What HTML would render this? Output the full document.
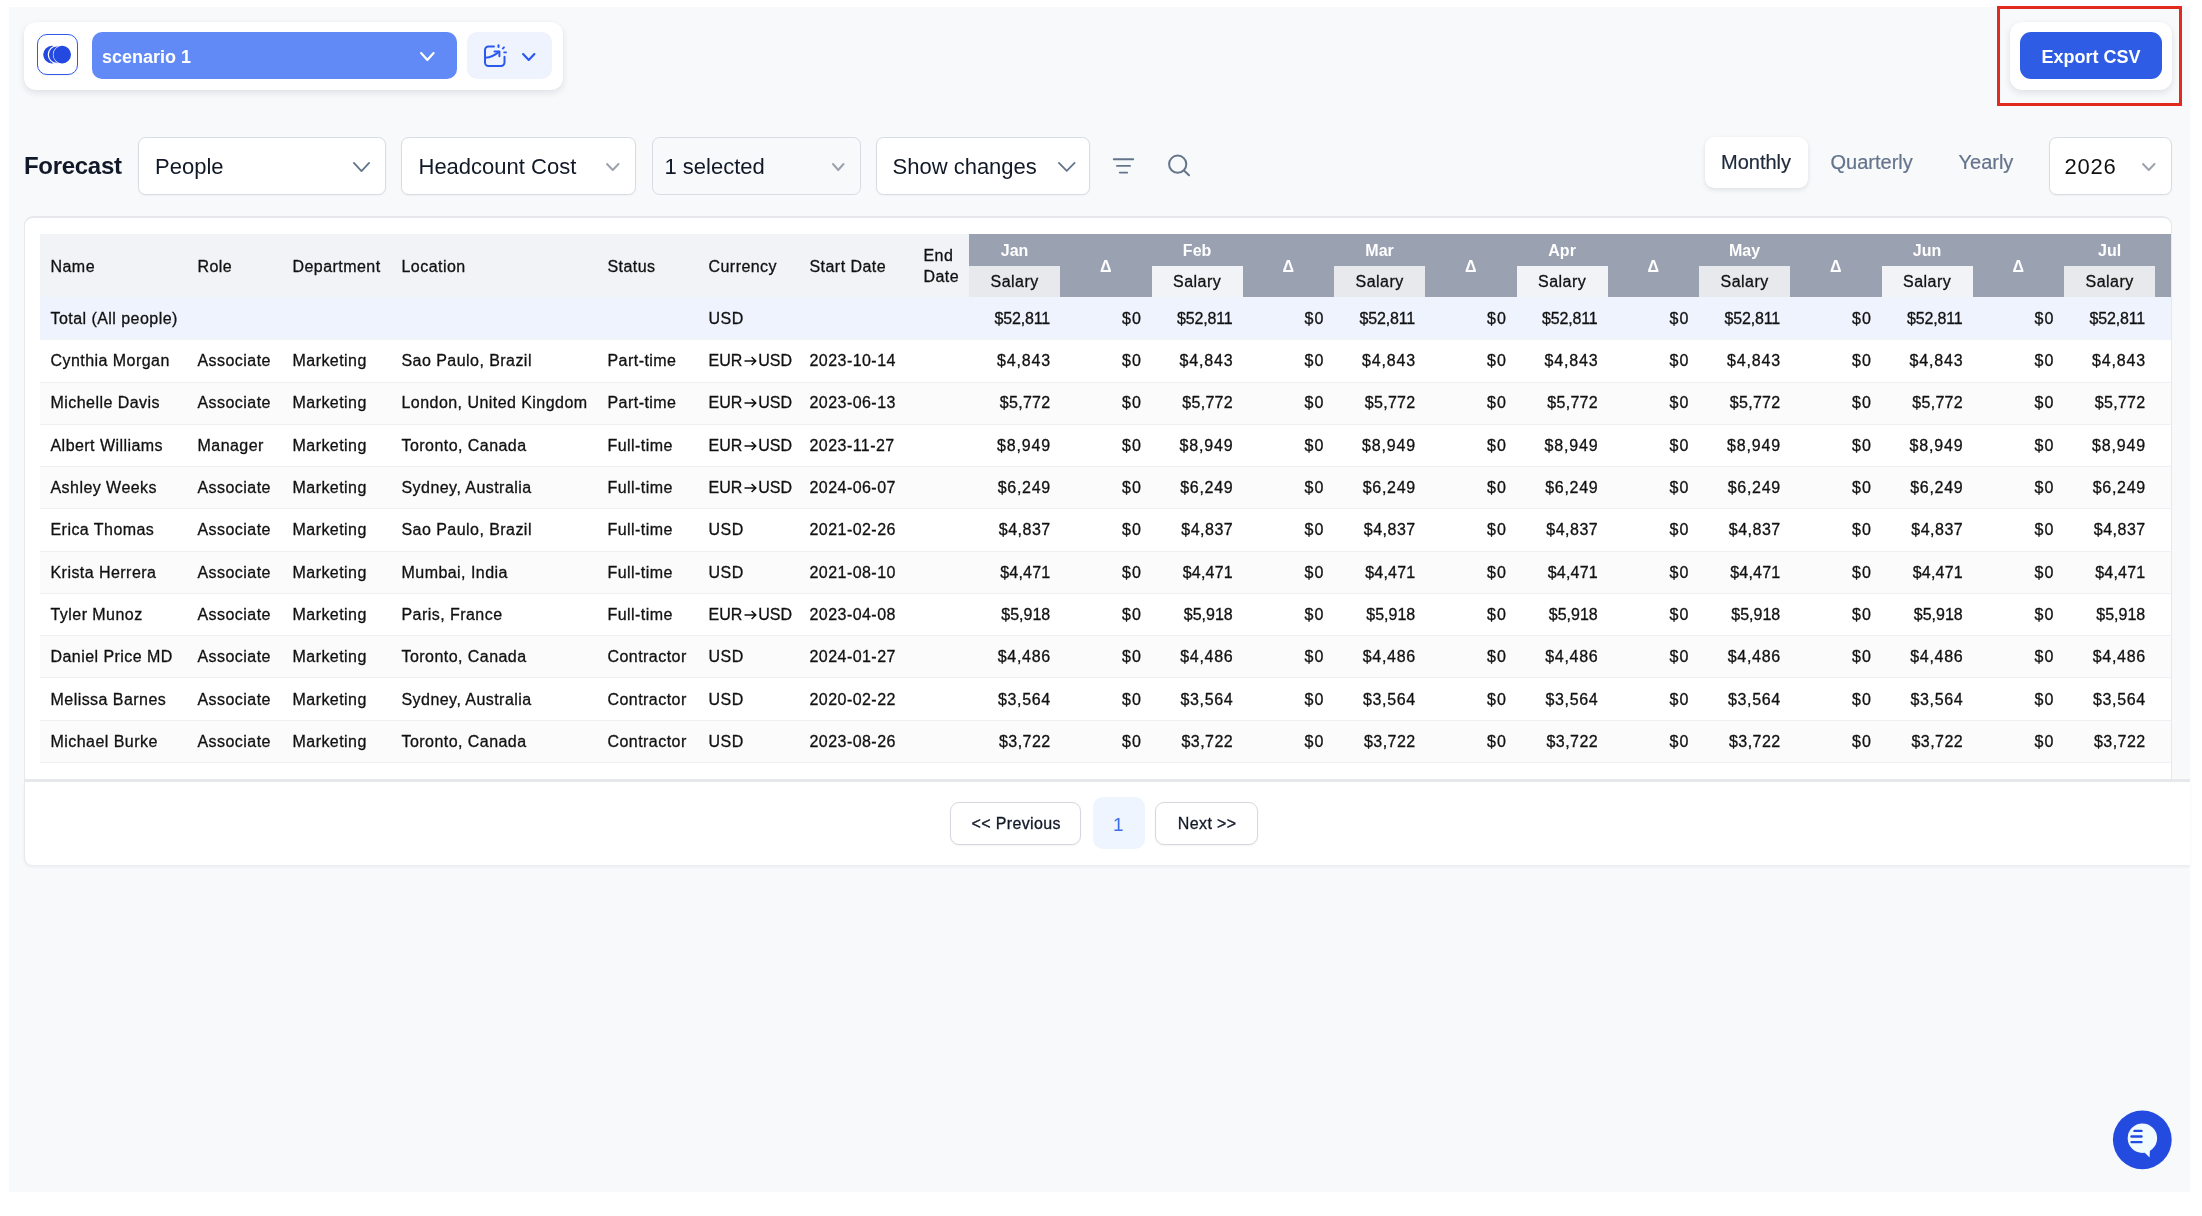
<!DOCTYPE html><html><head><meta charset="utf-8"><title>Forecast</title><style>
*{box-sizing:border-box;margin:0;padding:0}
html,body{width:2202px;height:1216px;overflow:hidden;background:#fff;font-family:"Liberation Sans",sans-serif;color:#111827}
.abs{position:absolute}
#page{position:absolute;left:9px;top:7px;width:2181px;height:1185px;background:#f8f9fb;overflow:hidden}
.card{position:absolute;background:#fff;border-radius:12px;box-shadow:0 3px 7px rgba(15,23,42,0.10),0 0 1px rgba(15,23,42,0.05)}
.dd{position:absolute;background:#fff;border:1px solid #d8dbe2;border-radius:7.5px;box-shadow:0 1px 2px rgba(0,0,0,0.04)}
.ddt{position:absolute;font-size:22px;color:#111;white-space:nowrap;line-height:26px}
.chev{position:absolute}
.t{position:absolute;white-space:nowrap;font-size:16px;line-height:20px;color:#111}
.r{text-align:right}
.c{text-align:center}
</style></head><body>
<div id="page"></div>
<div class="card" style="left:24px;top:22px;width:539px;height:68px"></div>
<div class="abs" style="left:37px;top:34px;width:41px;height:41px;border:1.8px solid #2f5ce6;border-radius:10px;background:#fff;box-shadow:0 1px 2px rgba(0,0,0,0.06)"></div>
<svg class="abs" style="left:37px;top:34px" width="41" height="41" viewBox="37 34 41 41"><circle cx="52.0" cy="54.6" r="8.8" fill="#2349e0"/><circle cx="57.1" cy="54.6" r="8.8" fill="#2349e0" stroke="#fff" stroke-width="1.2"/><circle cx="62.2" cy="54.6" r="8.8" fill="#2349e0" stroke="#fff" stroke-width="1.2"/><circle cx="62.2" cy="54.6" r="8.8" fill="#2349e0"/></svg>
<div class="abs" style="left:91.5px;top:32px;width:365px;height:47px;background:#618af6;border-radius:10px"></div>
<svg class="abs" style="left:418px;top:49.8px" width="18.69999999999999" height="13.100000000000001" viewBox="418 49.8 18.69999999999999 13.100000000000001"><polyline points="421.10,52.90 427.35,59.80 433.60,52.90" fill="none" stroke="#fff" stroke-width="2.2" stroke-linecap="round" stroke-linejoin="round"/></svg>
<div class="abs" style="left:466.5px;top:32px;width:85.5px;height:47px;background:#eef3fe;border-radius:10px"></div>
<svg class="abs" style="left:476px;top:36px" width="70" height="40" viewBox="476 36 70 40" fill="none" stroke="#2b59f0" stroke-width="2" stroke-linecap="round" stroke-linejoin="round"><path d="M494 46.5 H488.5 a3.5 3.5 0 0 0 -3.5 3.5 V62.6 a3.5 3.5 0 0 0 3.5 3.5 H501 a3.5 3.5 0 0 0 3.5 -3.5 V56.8"/><path d="M485.4 57.7 C491 57.5 494.5 55.8 499 51.8"/><path d="M494.5 51.5 H499.4 V56.3"/><path d="M498.5 45.2 V46.9" stroke-width="2"/><path d="M502.8 48.6 L504 47.3" stroke-width="1.8"/><path d="M504.2 52.4 H506" stroke-width="1.8"/></svg>
<svg class="abs" style="left:520px;top:50.6px" width="17.5" height="12.0" viewBox="520 50.6 17.5 12.0"><polyline points="523.10,53.70 528.75,59.50 534.40,53.70" fill="none" stroke="#2b59f0" stroke-width="2.2" stroke-linecap="round" stroke-linejoin="round"/></svg>
<div class="card" style="left:2010px;top:22px;width:162px;height:68px"></div>
<div class="abs" style="left:2020px;top:32px;width:142px;height:47.4px;background:#2e5ce5;border-radius:11px"></div>
<div class="abs" style="left:1997px;top:6px;width:185px;height:100px;border:3px solid #e22a1f"></div>
<div class="dd" style="left:138px;top:136.5px;width:247.5px;height:58px;background:#fff;"></div>
<svg class="abs" style="left:351px;top:160px" width="21" height="14" viewBox="351 160 21 14"><polyline points="353.90,162.90 361.50,171.10 369.10,162.90" fill="none" stroke="#64748b" stroke-width="1.8" stroke-linecap="round" stroke-linejoin="round"/></svg>
<div class="dd" style="left:401px;top:136.5px;width:235px;height:58px;background:#fff;"></div>
<svg class="abs" style="left:604px;top:160.5px" width="17.5" height="12.0" viewBox="604 160.5 17.5 12.0"><polyline points="607.00,163.50 612.75,169.50 618.50,163.50" fill="none" stroke="#9ca3af" stroke-width="2.0" stroke-linecap="round" stroke-linejoin="round"/></svg>
<div class="dd" style="left:652px;top:136.5px;width:208.5px;height:58px;background:#f8f9fb;box-shadow:none;"></div>
<svg class="abs" style="left:829.5px;top:160.5px" width="16.5" height="12.0" viewBox="829.5 160.5 16.5 12.0"><polyline points="832.50,163.50 837.75,169.50 843.00,163.50" fill="none" stroke="#9ca3af" stroke-width="2.0" stroke-linecap="round" stroke-linejoin="round"/></svg>
<div class="dd" style="left:876px;top:136.5px;width:213.5px;height:58px;background:#fff;"></div>
<svg class="abs" style="left:1055.5px;top:160px" width="21.5" height="13.699999999999989" viewBox="1055.5 160 21.5 13.699999999999989"><polyline points="1058.40,162.90 1066.25,170.80 1074.10,162.90" fill="none" stroke="#64748b" stroke-width="1.8" stroke-linecap="round" stroke-linejoin="round"/></svg>
<svg class="abs" style="left:1108px;top:150px" width="32" height="30" viewBox="1108 150 32 30" fill="none" stroke="#64748b" stroke-width="1.9" stroke-linecap="round"><path d="M1113.8 159.2 H1133.2"/><path d="M1117 165.9 H1130"/><path d="M1119.8 172.6 H1127.2"/></svg>
<svg class="abs" style="left:1160px;top:148px" width="36" height="36" viewBox="1160 148 36 36" fill="none" stroke="#64748b" stroke-width="2" stroke-linecap="round"><circle cx="1177.7" cy="164.2" r="8.6"/><path d="M1184 170.5 L1189 175.3"/></svg>
<div class="abs" style="left:1705px;top:137.3px;width:103px;height:51px;background:#fff;border-radius:9px;box-shadow:0 2px 5px rgba(15,23,42,0.10),0 0 1px rgba(15,23,42,0.06)"></div>
<div class="dd" style="left:2048.5px;top:136.5px;width:123px;height:58.5px"></div>
<svg class="abs" style="left:2140px;top:160.5px" width="17.5" height="12.0" viewBox="2140 160.5 17.5 12.0"><polyline points="2143.00,163.50 2148.75,169.50 2154.50,163.50" fill="none" stroke="#9ca3af" stroke-width="2.0" stroke-linecap="round" stroke-linejoin="round"/></svg>
<div class="abs" style="left:24px;top:216.2px;width:2147.5px;height:566px;background:#fff;border:1px solid #e6e8ec;border-top:2px solid #e6e8ec;border-bottom:none;border-radius:9px 9px 0 0"></div>
<div class="abs" style="left:40px;top:234px;width:2131px;height:530px;overflow:hidden">
<div class="abs" style="left:0.00px;top:0.00px;width:929.00px;height:62.50px;background:#f2f3f7"></div>
<div class="abs" style="left:929.00px;top:0.00px;width:1202.00px;height:62.50px;background:#9aa1b1"></div>
<div class="abs" style="left:929.00px;top:32.00px;width:91.20px;height:30.50px;background:#e8e9ed"></div>
<div class="abs" style="left:1111.50px;top:32.00px;width:91.20px;height:30.50px;background:#f2f3f7"></div>
<div class="abs" style="left:1294.00px;top:32.00px;width:91.20px;height:30.50px;background:#e8e9ed"></div>
<div class="abs" style="left:1476.50px;top:32.00px;width:91.20px;height:30.50px;background:#f2f3f7"></div>
<div class="abs" style="left:1659.00px;top:32.00px;width:91.20px;height:30.50px;background:#e8e9ed"></div>
<div class="abs" style="left:1841.50px;top:32.00px;width:91.20px;height:30.50px;background:#f2f3f7"></div>
<div class="abs" style="left:2024.00px;top:32.00px;width:91.20px;height:30.50px;background:#e8e9ed"></div>
<div class="abs" style="left:0.00px;top:62.50px;width:2131.00px;height:43.80px;background:#eef3fe;border-bottom:1px solid #f2f3f6"></div>
<div class="abs" style="left:0.00px;top:106.30px;width:2131.00px;height:42.27px;background:#fff;border-bottom:1px solid #eff0f3"></div>
<div class="abs" style="left:0.00px;top:148.57px;width:2131.00px;height:42.27px;background:#fbfbfc;border-bottom:1px solid #eff0f3"></div>
<div class="abs" style="left:0.00px;top:190.84px;width:2131.00px;height:42.27px;background:#fff;border-bottom:1px solid #eff0f3"></div>
<div class="abs" style="left:0.00px;top:233.11px;width:2131.00px;height:42.27px;background:#fbfbfc;border-bottom:1px solid #eff0f3"></div>
<div class="abs" style="left:0.00px;top:275.38px;width:2131.00px;height:42.27px;background:#fff;border-bottom:1px solid #eff0f3"></div>
<div class="abs" style="left:0.00px;top:317.65px;width:2131.00px;height:42.27px;background:#fbfbfc;border-bottom:1px solid #eff0f3"></div>
<div class="abs" style="left:0.00px;top:359.92px;width:2131.00px;height:42.27px;background:#fff;border-bottom:1px solid #eff0f3"></div>
<div class="abs" style="left:0.00px;top:402.19px;width:2131.00px;height:42.27px;background:#fbfbfc;border-bottom:1px solid #eff0f3"></div>
<div class="abs" style="left:0.00px;top:444.46px;width:2131.00px;height:42.27px;background:#fff;border-bottom:1px solid #eff0f3"></div>
<div class="abs" style="left:0.00px;top:486.73px;width:2131.00px;height:42.27px;background:#fbfbfc;border-bottom:1px solid #eff0f3"></div>
<div class="abs" style="left:0;top:0;width:2131px;height:530px;will-change:transform">
<div class="t" style="top:22.86px;font-size:16px;line-height:20px;color:#111;left:10.50px;letter-spacing:0.45px;-webkit-text-stroke:0.3px currentColor;">Name</div>
<div class="t" style="top:22.86px;font-size:16px;line-height:20px;color:#111;left:157.50px;letter-spacing:0.45px;-webkit-text-stroke:0.3px currentColor;">Role</div>
<div class="t" style="top:22.86px;font-size:16px;line-height:20px;color:#111;left:252.50px;letter-spacing:0.45px;-webkit-text-stroke:0.3px currentColor;">Department</div>
<div class="t" style="top:22.86px;font-size:16px;line-height:20px;color:#111;left:361.50px;letter-spacing:0.45px;-webkit-text-stroke:0.3px currentColor;">Location</div>
<div class="t" style="top:22.86px;font-size:16px;line-height:20px;color:#111;left:567.50px;letter-spacing:0.45px;-webkit-text-stroke:0.3px currentColor;">Status</div>
<div class="t" style="top:22.86px;font-size:16px;line-height:20px;color:#111;left:668.50px;letter-spacing:0.45px;-webkit-text-stroke:0.3px currentColor;">Currency</div>
<div class="t" style="top:22.86px;font-size:16px;line-height:20px;color:#111;left:769.50px;letter-spacing:0.45px;-webkit-text-stroke:0.3px currentColor;">Start Date</div>
<div class="t" style="top:11.56px;font-size:16px;line-height:20px;color:#111;left:883.50px;letter-spacing:0.45px;-webkit-text-stroke:0.3px currentColor;">End</div>
<div class="t" style="top:32.66px;font-size:16px;line-height:20px;color:#111;left:883.50px;letter-spacing:0.45px;-webkit-text-stroke:0.3px currentColor;">Date</div>
<div class="t" style="top:7.26px;font-size:16px;line-height:20px;font-weight:700;color:#fff;left:774.60px;width:400px;text-align:center;">Jan</div>
<div class="t" style="top:38.26px;font-size:16px;line-height:20px;color:#111;left:774.60px;width:400px;text-align:center;letter-spacing:0.45px;-webkit-text-stroke:0.3px currentColor;">Salary</div>
<div class="t" style="top:23.06px;font-size:16px;line-height:20px;font-weight:700;color:#fff;left:865.85px;width:400px;text-align:center;">&#916;</div>
<div class="t" style="top:7.26px;font-size:16px;line-height:20px;font-weight:700;color:#fff;left:957.10px;width:400px;text-align:center;">Feb</div>
<div class="t" style="top:38.26px;font-size:16px;line-height:20px;color:#111;left:957.10px;width:400px;text-align:center;letter-spacing:0.45px;-webkit-text-stroke:0.3px currentColor;">Salary</div>
<div class="t" style="top:23.06px;font-size:16px;line-height:20px;font-weight:700;color:#fff;left:1048.35px;width:400px;text-align:center;">&#916;</div>
<div class="t" style="top:7.26px;font-size:16px;line-height:20px;font-weight:700;color:#fff;left:1139.60px;width:400px;text-align:center;">Mar</div>
<div class="t" style="top:38.26px;font-size:16px;line-height:20px;color:#111;left:1139.60px;width:400px;text-align:center;letter-spacing:0.45px;-webkit-text-stroke:0.3px currentColor;">Salary</div>
<div class="t" style="top:23.06px;font-size:16px;line-height:20px;font-weight:700;color:#fff;left:1230.85px;width:400px;text-align:center;">&#916;</div>
<div class="t" style="top:7.26px;font-size:16px;line-height:20px;font-weight:700;color:#fff;left:1322.10px;width:400px;text-align:center;">Apr</div>
<div class="t" style="top:38.26px;font-size:16px;line-height:20px;color:#111;left:1322.10px;width:400px;text-align:center;letter-spacing:0.45px;-webkit-text-stroke:0.3px currentColor;">Salary</div>
<div class="t" style="top:23.06px;font-size:16px;line-height:20px;font-weight:700;color:#fff;left:1413.35px;width:400px;text-align:center;">&#916;</div>
<div class="t" style="top:7.26px;font-size:16px;line-height:20px;font-weight:700;color:#fff;left:1504.60px;width:400px;text-align:center;">May</div>
<div class="t" style="top:38.26px;font-size:16px;line-height:20px;color:#111;left:1504.60px;width:400px;text-align:center;letter-spacing:0.45px;-webkit-text-stroke:0.3px currentColor;">Salary</div>
<div class="t" style="top:23.06px;font-size:16px;line-height:20px;font-weight:700;color:#fff;left:1595.85px;width:400px;text-align:center;">&#916;</div>
<div class="t" style="top:7.26px;font-size:16px;line-height:20px;font-weight:700;color:#fff;left:1687.10px;width:400px;text-align:center;">Jun</div>
<div class="t" style="top:38.26px;font-size:16px;line-height:20px;color:#111;left:1687.10px;width:400px;text-align:center;letter-spacing:0.45px;-webkit-text-stroke:0.3px currentColor;">Salary</div>
<div class="t" style="top:23.06px;font-size:16px;line-height:20px;font-weight:700;color:#fff;left:1778.35px;width:400px;text-align:center;">&#916;</div>
<div class="t" style="top:7.26px;font-size:16px;line-height:20px;font-weight:700;color:#fff;left:1869.60px;width:400px;text-align:center;">Jul</div>
<div class="t" style="top:38.26px;font-size:16px;line-height:20px;color:#111;left:1869.60px;width:400px;text-align:center;letter-spacing:0.45px;-webkit-text-stroke:0.3px currentColor;">Salary</div>
<div class="t" style="top:23.06px;font-size:16px;line-height:20px;font-weight:700;color:#fff;left:1960.85px;width:400px;text-align:center;">&#916;</div>
<div class="t" style="top:74.76px;font-size:16px;line-height:20px;color:#111;left:10.50px;letter-spacing:0.45px;-webkit-text-stroke:0.3px currentColor;">Total (All people)</div>
<div class="t" style="top:74.76px;font-size:16px;line-height:20px;color:#111;left:668.50px;letter-spacing:0.45px;-webkit-text-stroke:0.3px currentColor;">USD</div>
<div class="t" style="top:74.76px;font-size:16px;line-height:20px;color:#111;left:610.05px;width:400px;text-align:right;letter-spacing:-0.15px;-webkit-text-stroke:0.3px currentColor;">$52,811</div>
<div class="t" style="top:74.76px;font-size:16px;line-height:20px;color:#111;left:702.30px;width:400px;text-align:right;letter-spacing:1.3px;-webkit-text-stroke:0.3px currentColor;">$0</div>
<div class="t" style="top:74.76px;font-size:16px;line-height:20px;color:#111;left:792.55px;width:400px;text-align:right;letter-spacing:-0.15px;-webkit-text-stroke:0.3px currentColor;">$52,811</div>
<div class="t" style="top:74.76px;font-size:16px;line-height:20px;color:#111;left:884.80px;width:400px;text-align:right;letter-spacing:1.3px;-webkit-text-stroke:0.3px currentColor;">$0</div>
<div class="t" style="top:74.76px;font-size:16px;line-height:20px;color:#111;left:975.05px;width:400px;text-align:right;letter-spacing:-0.15px;-webkit-text-stroke:0.3px currentColor;">$52,811</div>
<div class="t" style="top:74.76px;font-size:16px;line-height:20px;color:#111;left:1067.30px;width:400px;text-align:right;letter-spacing:1.3px;-webkit-text-stroke:0.3px currentColor;">$0</div>
<div class="t" style="top:74.76px;font-size:16px;line-height:20px;color:#111;left:1157.55px;width:400px;text-align:right;letter-spacing:-0.15px;-webkit-text-stroke:0.3px currentColor;">$52,811</div>
<div class="t" style="top:74.76px;font-size:16px;line-height:20px;color:#111;left:1249.80px;width:400px;text-align:right;letter-spacing:1.3px;-webkit-text-stroke:0.3px currentColor;">$0</div>
<div class="t" style="top:74.76px;font-size:16px;line-height:20px;color:#111;left:1340.05px;width:400px;text-align:right;letter-spacing:-0.15px;-webkit-text-stroke:0.3px currentColor;">$52,811</div>
<div class="t" style="top:74.76px;font-size:16px;line-height:20px;color:#111;left:1432.30px;width:400px;text-align:right;letter-spacing:1.3px;-webkit-text-stroke:0.3px currentColor;">$0</div>
<div class="t" style="top:74.76px;font-size:16px;line-height:20px;color:#111;left:1522.55px;width:400px;text-align:right;letter-spacing:-0.15px;-webkit-text-stroke:0.3px currentColor;">$52,811</div>
<div class="t" style="top:74.76px;font-size:16px;line-height:20px;color:#111;left:1614.80px;width:400px;text-align:right;letter-spacing:1.3px;-webkit-text-stroke:0.3px currentColor;">$0</div>
<div class="t" style="top:74.76px;font-size:16px;line-height:20px;color:#111;left:1705.05px;width:400px;text-align:right;letter-spacing:-0.15px;-webkit-text-stroke:0.3px currentColor;">$52,811</div>
<div class="t" style="top:74.76px;font-size:16px;line-height:20px;color:#111;left:1797.30px;width:400px;text-align:right;letter-spacing:1.3px;-webkit-text-stroke:0.3px currentColor;">$0</div>
<div class="t" style="top:116.96px;font-size:16px;line-height:20px;color:#111;left:10.50px;letter-spacing:0.45px;-webkit-text-stroke:0.3px currentColor;">Cynthia Morgan</div>
<div class="t" style="top:116.96px;font-size:16px;line-height:20px;color:#111;left:157.50px;letter-spacing:0.45px;-webkit-text-stroke:0.3px currentColor;">Associate</div>
<div class="t" style="top:116.96px;font-size:16px;line-height:20px;color:#111;left:252.50px;letter-spacing:0.45px;-webkit-text-stroke:0.3px currentColor;">Marketing</div>
<div class="t" style="top:116.96px;font-size:16px;line-height:20px;color:#111;left:361.50px;letter-spacing:0.45px;-webkit-text-stroke:0.3px currentColor;">Sao Paulo, Brazil</div>
<div class="t" style="top:116.96px;font-size:16px;line-height:20px;color:#111;left:567.50px;letter-spacing:0.45px;-webkit-text-stroke:0.3px currentColor;">Part-time</div>
<div class="t" style="top:116.96px;font-size:16px;line-height:20px;color:#111;left:668.50px;-webkit-text-stroke:0.3px currentColor;">EUR<svg width="13" height="10" viewBox="0 0 13 10" style="display:inline-block;vertical-align:0px;margin:0 1.5px 0 1.5px"><path d="M0.5 5 H11.6 M7.6 1 L11.8 5 L7.6 9" fill="none" stroke="#111" stroke-width="1.6" stroke-linejoin="round"/></svg>USD</div>
<div class="t" style="top:116.96px;font-size:16px;line-height:20px;color:#111;left:769.50px;letter-spacing:0.45px;-webkit-text-stroke:0.3px currentColor;">2023-10-14</div>
<div class="t" style="top:116.96px;font-size:16px;line-height:20px;color:#111;left:611.05px;width:400px;text-align:right;letter-spacing:0.85px;-webkit-text-stroke:0.3px currentColor;">$4,843</div>
<div class="t" style="top:116.96px;font-size:16px;line-height:20px;color:#111;left:702.30px;width:400px;text-align:right;letter-spacing:1.3px;-webkit-text-stroke:0.3px currentColor;">$0</div>
<div class="t" style="top:116.96px;font-size:16px;line-height:20px;color:#111;left:793.55px;width:400px;text-align:right;letter-spacing:0.85px;-webkit-text-stroke:0.3px currentColor;">$4,843</div>
<div class="t" style="top:116.96px;font-size:16px;line-height:20px;color:#111;left:884.80px;width:400px;text-align:right;letter-spacing:1.3px;-webkit-text-stroke:0.3px currentColor;">$0</div>
<div class="t" style="top:116.96px;font-size:16px;line-height:20px;color:#111;left:976.05px;width:400px;text-align:right;letter-spacing:0.85px;-webkit-text-stroke:0.3px currentColor;">$4,843</div>
<div class="t" style="top:116.96px;font-size:16px;line-height:20px;color:#111;left:1067.30px;width:400px;text-align:right;letter-spacing:1.3px;-webkit-text-stroke:0.3px currentColor;">$0</div>
<div class="t" style="top:116.96px;font-size:16px;line-height:20px;color:#111;left:1158.55px;width:400px;text-align:right;letter-spacing:0.85px;-webkit-text-stroke:0.3px currentColor;">$4,843</div>
<div class="t" style="top:116.96px;font-size:16px;line-height:20px;color:#111;left:1249.80px;width:400px;text-align:right;letter-spacing:1.3px;-webkit-text-stroke:0.3px currentColor;">$0</div>
<div class="t" style="top:116.96px;font-size:16px;line-height:20px;color:#111;left:1341.05px;width:400px;text-align:right;letter-spacing:0.85px;-webkit-text-stroke:0.3px currentColor;">$4,843</div>
<div class="t" style="top:116.96px;font-size:16px;line-height:20px;color:#111;left:1432.30px;width:400px;text-align:right;letter-spacing:1.3px;-webkit-text-stroke:0.3px currentColor;">$0</div>
<div class="t" style="top:116.96px;font-size:16px;line-height:20px;color:#111;left:1523.55px;width:400px;text-align:right;letter-spacing:0.85px;-webkit-text-stroke:0.3px currentColor;">$4,843</div>
<div class="t" style="top:116.96px;font-size:16px;line-height:20px;color:#111;left:1614.80px;width:400px;text-align:right;letter-spacing:1.3px;-webkit-text-stroke:0.3px currentColor;">$0</div>
<div class="t" style="top:116.96px;font-size:16px;line-height:20px;color:#111;left:1706.05px;width:400px;text-align:right;letter-spacing:0.85px;-webkit-text-stroke:0.3px currentColor;">$4,843</div>
<div class="t" style="top:116.96px;font-size:16px;line-height:20px;color:#111;left:1797.30px;width:400px;text-align:right;letter-spacing:1.3px;-webkit-text-stroke:0.3px currentColor;">$0</div>
<div class="t" style="top:159.30px;font-size:16px;line-height:20px;color:#111;left:10.50px;letter-spacing:0.45px;-webkit-text-stroke:0.3px currentColor;">Michelle Davis</div>
<div class="t" style="top:159.30px;font-size:16px;line-height:20px;color:#111;left:157.50px;letter-spacing:0.45px;-webkit-text-stroke:0.3px currentColor;">Associate</div>
<div class="t" style="top:159.30px;font-size:16px;line-height:20px;color:#111;left:252.50px;letter-spacing:0.45px;-webkit-text-stroke:0.3px currentColor;">Marketing</div>
<div class="t" style="top:159.30px;font-size:16px;line-height:20px;color:#111;left:361.50px;letter-spacing:0.45px;-webkit-text-stroke:0.3px currentColor;">London, United Kingdom</div>
<div class="t" style="top:159.30px;font-size:16px;line-height:20px;color:#111;left:567.50px;letter-spacing:0.45px;-webkit-text-stroke:0.3px currentColor;">Part-time</div>
<div class="t" style="top:159.30px;font-size:16px;line-height:20px;color:#111;left:668.50px;-webkit-text-stroke:0.3px currentColor;">EUR<svg width="13" height="10" viewBox="0 0 13 10" style="display:inline-block;vertical-align:0px;margin:0 1.5px 0 1.5px"><path d="M0.5 5 H11.6 M7.6 1 L11.8 5 L7.6 9" fill="none" stroke="#111" stroke-width="1.6" stroke-linejoin="round"/></svg>USD</div>
<div class="t" style="top:159.30px;font-size:16px;line-height:20px;color:#111;left:769.50px;letter-spacing:0.45px;-webkit-text-stroke:0.3px currentColor;">2023-06-13</div>
<div class="t" style="top:159.30px;font-size:16px;line-height:20px;color:#111;left:610.50px;width:400px;text-align:right;letter-spacing:0.3px;-webkit-text-stroke:0.3px currentColor;">$5,772</div>
<div class="t" style="top:159.30px;font-size:16px;line-height:20px;color:#111;left:702.30px;width:400px;text-align:right;letter-spacing:1.3px;-webkit-text-stroke:0.3px currentColor;">$0</div>
<div class="t" style="top:159.30px;font-size:16px;line-height:20px;color:#111;left:793.00px;width:400px;text-align:right;letter-spacing:0.3px;-webkit-text-stroke:0.3px currentColor;">$5,772</div>
<div class="t" style="top:159.30px;font-size:16px;line-height:20px;color:#111;left:884.80px;width:400px;text-align:right;letter-spacing:1.3px;-webkit-text-stroke:0.3px currentColor;">$0</div>
<div class="t" style="top:159.30px;font-size:16px;line-height:20px;color:#111;left:975.50px;width:400px;text-align:right;letter-spacing:0.3px;-webkit-text-stroke:0.3px currentColor;">$5,772</div>
<div class="t" style="top:159.30px;font-size:16px;line-height:20px;color:#111;left:1067.30px;width:400px;text-align:right;letter-spacing:1.3px;-webkit-text-stroke:0.3px currentColor;">$0</div>
<div class="t" style="top:159.30px;font-size:16px;line-height:20px;color:#111;left:1158.00px;width:400px;text-align:right;letter-spacing:0.3px;-webkit-text-stroke:0.3px currentColor;">$5,772</div>
<div class="t" style="top:159.30px;font-size:16px;line-height:20px;color:#111;left:1249.80px;width:400px;text-align:right;letter-spacing:1.3px;-webkit-text-stroke:0.3px currentColor;">$0</div>
<div class="t" style="top:159.30px;font-size:16px;line-height:20px;color:#111;left:1340.50px;width:400px;text-align:right;letter-spacing:0.3px;-webkit-text-stroke:0.3px currentColor;">$5,772</div>
<div class="t" style="top:159.30px;font-size:16px;line-height:20px;color:#111;left:1432.30px;width:400px;text-align:right;letter-spacing:1.3px;-webkit-text-stroke:0.3px currentColor;">$0</div>
<div class="t" style="top:159.30px;font-size:16px;line-height:20px;color:#111;left:1523.00px;width:400px;text-align:right;letter-spacing:0.3px;-webkit-text-stroke:0.3px currentColor;">$5,772</div>
<div class="t" style="top:159.30px;font-size:16px;line-height:20px;color:#111;left:1614.80px;width:400px;text-align:right;letter-spacing:1.3px;-webkit-text-stroke:0.3px currentColor;">$0</div>
<div class="t" style="top:159.30px;font-size:16px;line-height:20px;color:#111;left:1705.50px;width:400px;text-align:right;letter-spacing:0.3px;-webkit-text-stroke:0.3px currentColor;">$5,772</div>
<div class="t" style="top:159.30px;font-size:16px;line-height:20px;color:#111;left:1797.30px;width:400px;text-align:right;letter-spacing:1.3px;-webkit-text-stroke:0.3px currentColor;">$0</div>
<div class="t" style="top:201.64px;font-size:16px;line-height:20px;color:#111;left:10.50px;letter-spacing:0.45px;-webkit-text-stroke:0.3px currentColor;">Albert Williams</div>
<div class="t" style="top:201.64px;font-size:16px;line-height:20px;color:#111;left:157.50px;letter-spacing:0.45px;-webkit-text-stroke:0.3px currentColor;">Manager</div>
<div class="t" style="top:201.64px;font-size:16px;line-height:20px;color:#111;left:252.50px;letter-spacing:0.45px;-webkit-text-stroke:0.3px currentColor;">Marketing</div>
<div class="t" style="top:201.64px;font-size:16px;line-height:20px;color:#111;left:361.50px;letter-spacing:0.45px;-webkit-text-stroke:0.3px currentColor;">Toronto, Canada</div>
<div class="t" style="top:201.64px;font-size:16px;line-height:20px;color:#111;left:567.50px;letter-spacing:0.45px;-webkit-text-stroke:0.3px currentColor;">Full-time</div>
<div class="t" style="top:201.64px;font-size:16px;line-height:20px;color:#111;left:668.50px;-webkit-text-stroke:0.3px currentColor;">EUR<svg width="13" height="10" viewBox="0 0 13 10" style="display:inline-block;vertical-align:0px;margin:0 1.5px 0 1.5px"><path d="M0.5 5 H11.6 M7.6 1 L11.8 5 L7.6 9" fill="none" stroke="#111" stroke-width="1.6" stroke-linejoin="round"/></svg>USD</div>
<div class="t" style="top:201.64px;font-size:16px;line-height:20px;color:#111;left:769.50px;letter-spacing:0.45px;-webkit-text-stroke:0.3px currentColor;">2023-11-27</div>
<div class="t" style="top:201.64px;font-size:16px;line-height:20px;color:#111;left:611.05px;width:400px;text-align:right;letter-spacing:0.85px;-webkit-text-stroke:0.3px currentColor;">$8,949</div>
<div class="t" style="top:201.64px;font-size:16px;line-height:20px;color:#111;left:702.30px;width:400px;text-align:right;letter-spacing:1.3px;-webkit-text-stroke:0.3px currentColor;">$0</div>
<div class="t" style="top:201.64px;font-size:16px;line-height:20px;color:#111;left:793.55px;width:400px;text-align:right;letter-spacing:0.85px;-webkit-text-stroke:0.3px currentColor;">$8,949</div>
<div class="t" style="top:201.64px;font-size:16px;line-height:20px;color:#111;left:884.80px;width:400px;text-align:right;letter-spacing:1.3px;-webkit-text-stroke:0.3px currentColor;">$0</div>
<div class="t" style="top:201.64px;font-size:16px;line-height:20px;color:#111;left:976.05px;width:400px;text-align:right;letter-spacing:0.85px;-webkit-text-stroke:0.3px currentColor;">$8,949</div>
<div class="t" style="top:201.64px;font-size:16px;line-height:20px;color:#111;left:1067.30px;width:400px;text-align:right;letter-spacing:1.3px;-webkit-text-stroke:0.3px currentColor;">$0</div>
<div class="t" style="top:201.64px;font-size:16px;line-height:20px;color:#111;left:1158.55px;width:400px;text-align:right;letter-spacing:0.85px;-webkit-text-stroke:0.3px currentColor;">$8,949</div>
<div class="t" style="top:201.64px;font-size:16px;line-height:20px;color:#111;left:1249.80px;width:400px;text-align:right;letter-spacing:1.3px;-webkit-text-stroke:0.3px currentColor;">$0</div>
<div class="t" style="top:201.64px;font-size:16px;line-height:20px;color:#111;left:1341.05px;width:400px;text-align:right;letter-spacing:0.85px;-webkit-text-stroke:0.3px currentColor;">$8,949</div>
<div class="t" style="top:201.64px;font-size:16px;line-height:20px;color:#111;left:1432.30px;width:400px;text-align:right;letter-spacing:1.3px;-webkit-text-stroke:0.3px currentColor;">$0</div>
<div class="t" style="top:201.64px;font-size:16px;line-height:20px;color:#111;left:1523.55px;width:400px;text-align:right;letter-spacing:0.85px;-webkit-text-stroke:0.3px currentColor;">$8,949</div>
<div class="t" style="top:201.64px;font-size:16px;line-height:20px;color:#111;left:1614.80px;width:400px;text-align:right;letter-spacing:1.3px;-webkit-text-stroke:0.3px currentColor;">$0</div>
<div class="t" style="top:201.64px;font-size:16px;line-height:20px;color:#111;left:1706.05px;width:400px;text-align:right;letter-spacing:0.85px;-webkit-text-stroke:0.3px currentColor;">$8,949</div>
<div class="t" style="top:201.64px;font-size:16px;line-height:20px;color:#111;left:1797.30px;width:400px;text-align:right;letter-spacing:1.3px;-webkit-text-stroke:0.3px currentColor;">$0</div>
<div class="t" style="top:243.98px;font-size:16px;line-height:20px;color:#111;left:10.50px;letter-spacing:0.45px;-webkit-text-stroke:0.3px currentColor;">Ashley Weeks</div>
<div class="t" style="top:243.98px;font-size:16px;line-height:20px;color:#111;left:157.50px;letter-spacing:0.45px;-webkit-text-stroke:0.3px currentColor;">Associate</div>
<div class="t" style="top:243.98px;font-size:16px;line-height:20px;color:#111;left:252.50px;letter-spacing:0.45px;-webkit-text-stroke:0.3px currentColor;">Marketing</div>
<div class="t" style="top:243.98px;font-size:16px;line-height:20px;color:#111;left:361.50px;letter-spacing:0.45px;-webkit-text-stroke:0.3px currentColor;">Sydney, Australia</div>
<div class="t" style="top:243.98px;font-size:16px;line-height:20px;color:#111;left:567.50px;letter-spacing:0.45px;-webkit-text-stroke:0.3px currentColor;">Full-time</div>
<div class="t" style="top:243.98px;font-size:16px;line-height:20px;color:#111;left:668.50px;-webkit-text-stroke:0.3px currentColor;">EUR<svg width="13" height="10" viewBox="0 0 13 10" style="display:inline-block;vertical-align:0px;margin:0 1.5px 0 1.5px"><path d="M0.5 5 H11.6 M7.6 1 L11.8 5 L7.6 9" fill="none" stroke="#111" stroke-width="1.6" stroke-linejoin="round"/></svg>USD</div>
<div class="t" style="top:243.98px;font-size:16px;line-height:20px;color:#111;left:769.50px;letter-spacing:0.45px;-webkit-text-stroke:0.3px currentColor;">2024-06-07</div>
<div class="t" style="top:243.98px;font-size:16px;line-height:20px;color:#111;left:610.90px;width:400px;text-align:right;letter-spacing:0.7px;-webkit-text-stroke:0.3px currentColor;">$6,249</div>
<div class="t" style="top:243.98px;font-size:16px;line-height:20px;color:#111;left:702.30px;width:400px;text-align:right;letter-spacing:1.3px;-webkit-text-stroke:0.3px currentColor;">$0</div>
<div class="t" style="top:243.98px;font-size:16px;line-height:20px;color:#111;left:793.40px;width:400px;text-align:right;letter-spacing:0.7px;-webkit-text-stroke:0.3px currentColor;">$6,249</div>
<div class="t" style="top:243.98px;font-size:16px;line-height:20px;color:#111;left:884.80px;width:400px;text-align:right;letter-spacing:1.3px;-webkit-text-stroke:0.3px currentColor;">$0</div>
<div class="t" style="top:243.98px;font-size:16px;line-height:20px;color:#111;left:975.90px;width:400px;text-align:right;letter-spacing:0.7px;-webkit-text-stroke:0.3px currentColor;">$6,249</div>
<div class="t" style="top:243.98px;font-size:16px;line-height:20px;color:#111;left:1067.30px;width:400px;text-align:right;letter-spacing:1.3px;-webkit-text-stroke:0.3px currentColor;">$0</div>
<div class="t" style="top:243.98px;font-size:16px;line-height:20px;color:#111;left:1158.40px;width:400px;text-align:right;letter-spacing:0.7px;-webkit-text-stroke:0.3px currentColor;">$6,249</div>
<div class="t" style="top:243.98px;font-size:16px;line-height:20px;color:#111;left:1249.80px;width:400px;text-align:right;letter-spacing:1.3px;-webkit-text-stroke:0.3px currentColor;">$0</div>
<div class="t" style="top:243.98px;font-size:16px;line-height:20px;color:#111;left:1340.90px;width:400px;text-align:right;letter-spacing:0.7px;-webkit-text-stroke:0.3px currentColor;">$6,249</div>
<div class="t" style="top:243.98px;font-size:16px;line-height:20px;color:#111;left:1432.30px;width:400px;text-align:right;letter-spacing:1.3px;-webkit-text-stroke:0.3px currentColor;">$0</div>
<div class="t" style="top:243.98px;font-size:16px;line-height:20px;color:#111;left:1523.40px;width:400px;text-align:right;letter-spacing:0.7px;-webkit-text-stroke:0.3px currentColor;">$6,249</div>
<div class="t" style="top:243.98px;font-size:16px;line-height:20px;color:#111;left:1614.80px;width:400px;text-align:right;letter-spacing:1.3px;-webkit-text-stroke:0.3px currentColor;">$0</div>
<div class="t" style="top:243.98px;font-size:16px;line-height:20px;color:#111;left:1705.90px;width:400px;text-align:right;letter-spacing:0.7px;-webkit-text-stroke:0.3px currentColor;">$6,249</div>
<div class="t" style="top:243.98px;font-size:16px;line-height:20px;color:#111;left:1797.30px;width:400px;text-align:right;letter-spacing:1.3px;-webkit-text-stroke:0.3px currentColor;">$0</div>
<div class="t" style="top:286.32px;font-size:16px;line-height:20px;color:#111;left:10.50px;letter-spacing:0.45px;-webkit-text-stroke:0.3px currentColor;">Erica Thomas</div>
<div class="t" style="top:286.32px;font-size:16px;line-height:20px;color:#111;left:157.50px;letter-spacing:0.45px;-webkit-text-stroke:0.3px currentColor;">Associate</div>
<div class="t" style="top:286.32px;font-size:16px;line-height:20px;color:#111;left:252.50px;letter-spacing:0.45px;-webkit-text-stroke:0.3px currentColor;">Marketing</div>
<div class="t" style="top:286.32px;font-size:16px;line-height:20px;color:#111;left:361.50px;letter-spacing:0.45px;-webkit-text-stroke:0.3px currentColor;">Sao Paulo, Brazil</div>
<div class="t" style="top:286.32px;font-size:16px;line-height:20px;color:#111;left:567.50px;letter-spacing:0.45px;-webkit-text-stroke:0.3px currentColor;">Full-time</div>
<div class="t" style="top:286.32px;font-size:16px;line-height:20px;color:#111;left:668.50px;letter-spacing:0.45px;-webkit-text-stroke:0.3px currentColor;">USD</div>
<div class="t" style="top:286.32px;font-size:16px;line-height:20px;color:#111;left:769.50px;letter-spacing:0.45px;-webkit-text-stroke:0.3px currentColor;">2021-02-26</div>
<div class="t" style="top:286.32px;font-size:16px;line-height:20px;color:#111;left:610.70px;width:400px;text-align:right;letter-spacing:0.5px;-webkit-text-stroke:0.3px currentColor;">$4,837</div>
<div class="t" style="top:286.32px;font-size:16px;line-height:20px;color:#111;left:702.30px;width:400px;text-align:right;letter-spacing:1.3px;-webkit-text-stroke:0.3px currentColor;">$0</div>
<div class="t" style="top:286.32px;font-size:16px;line-height:20px;color:#111;left:793.20px;width:400px;text-align:right;letter-spacing:0.5px;-webkit-text-stroke:0.3px currentColor;">$4,837</div>
<div class="t" style="top:286.32px;font-size:16px;line-height:20px;color:#111;left:884.80px;width:400px;text-align:right;letter-spacing:1.3px;-webkit-text-stroke:0.3px currentColor;">$0</div>
<div class="t" style="top:286.32px;font-size:16px;line-height:20px;color:#111;left:975.70px;width:400px;text-align:right;letter-spacing:0.5px;-webkit-text-stroke:0.3px currentColor;">$4,837</div>
<div class="t" style="top:286.32px;font-size:16px;line-height:20px;color:#111;left:1067.30px;width:400px;text-align:right;letter-spacing:1.3px;-webkit-text-stroke:0.3px currentColor;">$0</div>
<div class="t" style="top:286.32px;font-size:16px;line-height:20px;color:#111;left:1158.20px;width:400px;text-align:right;letter-spacing:0.5px;-webkit-text-stroke:0.3px currentColor;">$4,837</div>
<div class="t" style="top:286.32px;font-size:16px;line-height:20px;color:#111;left:1249.80px;width:400px;text-align:right;letter-spacing:1.3px;-webkit-text-stroke:0.3px currentColor;">$0</div>
<div class="t" style="top:286.32px;font-size:16px;line-height:20px;color:#111;left:1340.70px;width:400px;text-align:right;letter-spacing:0.5px;-webkit-text-stroke:0.3px currentColor;">$4,837</div>
<div class="t" style="top:286.32px;font-size:16px;line-height:20px;color:#111;left:1432.30px;width:400px;text-align:right;letter-spacing:1.3px;-webkit-text-stroke:0.3px currentColor;">$0</div>
<div class="t" style="top:286.32px;font-size:16px;line-height:20px;color:#111;left:1523.20px;width:400px;text-align:right;letter-spacing:0.5px;-webkit-text-stroke:0.3px currentColor;">$4,837</div>
<div class="t" style="top:286.32px;font-size:16px;line-height:20px;color:#111;left:1614.80px;width:400px;text-align:right;letter-spacing:1.3px;-webkit-text-stroke:0.3px currentColor;">$0</div>
<div class="t" style="top:286.32px;font-size:16px;line-height:20px;color:#111;left:1705.70px;width:400px;text-align:right;letter-spacing:0.5px;-webkit-text-stroke:0.3px currentColor;">$4,837</div>
<div class="t" style="top:286.32px;font-size:16px;line-height:20px;color:#111;left:1797.30px;width:400px;text-align:right;letter-spacing:1.3px;-webkit-text-stroke:0.3px currentColor;">$0</div>
<div class="t" style="top:328.66px;font-size:16px;line-height:20px;color:#111;left:10.50px;letter-spacing:0.45px;-webkit-text-stroke:0.3px currentColor;">Krista Herrera</div>
<div class="t" style="top:328.66px;font-size:16px;line-height:20px;color:#111;left:157.50px;letter-spacing:0.45px;-webkit-text-stroke:0.3px currentColor;">Associate</div>
<div class="t" style="top:328.66px;font-size:16px;line-height:20px;color:#111;left:252.50px;letter-spacing:0.45px;-webkit-text-stroke:0.3px currentColor;">Marketing</div>
<div class="t" style="top:328.66px;font-size:16px;line-height:20px;color:#111;left:361.50px;letter-spacing:0.45px;-webkit-text-stroke:0.3px currentColor;">Mumbai, India</div>
<div class="t" style="top:328.66px;font-size:16px;line-height:20px;color:#111;left:567.50px;letter-spacing:0.45px;-webkit-text-stroke:0.3px currentColor;">Full-time</div>
<div class="t" style="top:328.66px;font-size:16px;line-height:20px;color:#111;left:668.50px;letter-spacing:0.45px;-webkit-text-stroke:0.3px currentColor;">USD</div>
<div class="t" style="top:328.66px;font-size:16px;line-height:20px;color:#111;left:769.50px;letter-spacing:0.45px;-webkit-text-stroke:0.3px currentColor;">2021-08-10</div>
<div class="t" style="top:328.66px;font-size:16px;line-height:20px;color:#111;left:610.40px;width:400px;text-align:right;letter-spacing:0.2px;-webkit-text-stroke:0.3px currentColor;">$4,471</div>
<div class="t" style="top:328.66px;font-size:16px;line-height:20px;color:#111;left:702.30px;width:400px;text-align:right;letter-spacing:1.3px;-webkit-text-stroke:0.3px currentColor;">$0</div>
<div class="t" style="top:328.66px;font-size:16px;line-height:20px;color:#111;left:792.90px;width:400px;text-align:right;letter-spacing:0.2px;-webkit-text-stroke:0.3px currentColor;">$4,471</div>
<div class="t" style="top:328.66px;font-size:16px;line-height:20px;color:#111;left:884.80px;width:400px;text-align:right;letter-spacing:1.3px;-webkit-text-stroke:0.3px currentColor;">$0</div>
<div class="t" style="top:328.66px;font-size:16px;line-height:20px;color:#111;left:975.40px;width:400px;text-align:right;letter-spacing:0.2px;-webkit-text-stroke:0.3px currentColor;">$4,471</div>
<div class="t" style="top:328.66px;font-size:16px;line-height:20px;color:#111;left:1067.30px;width:400px;text-align:right;letter-spacing:1.3px;-webkit-text-stroke:0.3px currentColor;">$0</div>
<div class="t" style="top:328.66px;font-size:16px;line-height:20px;color:#111;left:1157.90px;width:400px;text-align:right;letter-spacing:0.2px;-webkit-text-stroke:0.3px currentColor;">$4,471</div>
<div class="t" style="top:328.66px;font-size:16px;line-height:20px;color:#111;left:1249.80px;width:400px;text-align:right;letter-spacing:1.3px;-webkit-text-stroke:0.3px currentColor;">$0</div>
<div class="t" style="top:328.66px;font-size:16px;line-height:20px;color:#111;left:1340.40px;width:400px;text-align:right;letter-spacing:0.2px;-webkit-text-stroke:0.3px currentColor;">$4,471</div>
<div class="t" style="top:328.66px;font-size:16px;line-height:20px;color:#111;left:1432.30px;width:400px;text-align:right;letter-spacing:1.3px;-webkit-text-stroke:0.3px currentColor;">$0</div>
<div class="t" style="top:328.66px;font-size:16px;line-height:20px;color:#111;left:1522.90px;width:400px;text-align:right;letter-spacing:0.2px;-webkit-text-stroke:0.3px currentColor;">$4,471</div>
<div class="t" style="top:328.66px;font-size:16px;line-height:20px;color:#111;left:1614.80px;width:400px;text-align:right;letter-spacing:1.3px;-webkit-text-stroke:0.3px currentColor;">$0</div>
<div class="t" style="top:328.66px;font-size:16px;line-height:20px;color:#111;left:1705.40px;width:400px;text-align:right;letter-spacing:0.2px;-webkit-text-stroke:0.3px currentColor;">$4,471</div>
<div class="t" style="top:328.66px;font-size:16px;line-height:20px;color:#111;left:1797.30px;width:400px;text-align:right;letter-spacing:1.3px;-webkit-text-stroke:0.3px currentColor;">$0</div>
<div class="t" style="top:371.00px;font-size:16px;line-height:20px;color:#111;left:10.50px;letter-spacing:0.45px;-webkit-text-stroke:0.3px currentColor;">Tyler Munoz</div>
<div class="t" style="top:371.00px;font-size:16px;line-height:20px;color:#111;left:157.50px;letter-spacing:0.45px;-webkit-text-stroke:0.3px currentColor;">Associate</div>
<div class="t" style="top:371.00px;font-size:16px;line-height:20px;color:#111;left:252.50px;letter-spacing:0.45px;-webkit-text-stroke:0.3px currentColor;">Marketing</div>
<div class="t" style="top:371.00px;font-size:16px;line-height:20px;color:#111;left:361.50px;letter-spacing:0.45px;-webkit-text-stroke:0.3px currentColor;">Paris, France</div>
<div class="t" style="top:371.00px;font-size:16px;line-height:20px;color:#111;left:567.50px;letter-spacing:0.45px;-webkit-text-stroke:0.3px currentColor;">Full-time</div>
<div class="t" style="top:371.00px;font-size:16px;line-height:20px;color:#111;left:668.50px;-webkit-text-stroke:0.3px currentColor;">EUR<svg width="13" height="10" viewBox="0 0 13 10" style="display:inline-block;vertical-align:0px;margin:0 1.5px 0 1.5px"><path d="M0.5 5 H11.6 M7.6 1 L11.8 5 L7.6 9" fill="none" stroke="#111" stroke-width="1.6" stroke-linejoin="round"/></svg>USD</div>
<div class="t" style="top:371.00px;font-size:16px;line-height:20px;color:#111;left:769.50px;letter-spacing:0.45px;-webkit-text-stroke:0.3px currentColor;">2023-04-08</div>
<div class="t" style="top:371.00px;font-size:16px;line-height:20px;color:#111;left:610.20px;width:400px;text-align:right;letter-spacing:0.0px;-webkit-text-stroke:0.3px currentColor;">$5,918</div>
<div class="t" style="top:371.00px;font-size:16px;line-height:20px;color:#111;left:702.30px;width:400px;text-align:right;letter-spacing:1.3px;-webkit-text-stroke:0.3px currentColor;">$0</div>
<div class="t" style="top:371.00px;font-size:16px;line-height:20px;color:#111;left:792.70px;width:400px;text-align:right;letter-spacing:0.0px;-webkit-text-stroke:0.3px currentColor;">$5,918</div>
<div class="t" style="top:371.00px;font-size:16px;line-height:20px;color:#111;left:884.80px;width:400px;text-align:right;letter-spacing:1.3px;-webkit-text-stroke:0.3px currentColor;">$0</div>
<div class="t" style="top:371.00px;font-size:16px;line-height:20px;color:#111;left:975.20px;width:400px;text-align:right;letter-spacing:0.0px;-webkit-text-stroke:0.3px currentColor;">$5,918</div>
<div class="t" style="top:371.00px;font-size:16px;line-height:20px;color:#111;left:1067.30px;width:400px;text-align:right;letter-spacing:1.3px;-webkit-text-stroke:0.3px currentColor;">$0</div>
<div class="t" style="top:371.00px;font-size:16px;line-height:20px;color:#111;left:1157.70px;width:400px;text-align:right;letter-spacing:0.0px;-webkit-text-stroke:0.3px currentColor;">$5,918</div>
<div class="t" style="top:371.00px;font-size:16px;line-height:20px;color:#111;left:1249.80px;width:400px;text-align:right;letter-spacing:1.3px;-webkit-text-stroke:0.3px currentColor;">$0</div>
<div class="t" style="top:371.00px;font-size:16px;line-height:20px;color:#111;left:1340.20px;width:400px;text-align:right;letter-spacing:0.0px;-webkit-text-stroke:0.3px currentColor;">$5,918</div>
<div class="t" style="top:371.00px;font-size:16px;line-height:20px;color:#111;left:1432.30px;width:400px;text-align:right;letter-spacing:1.3px;-webkit-text-stroke:0.3px currentColor;">$0</div>
<div class="t" style="top:371.00px;font-size:16px;line-height:20px;color:#111;left:1522.70px;width:400px;text-align:right;letter-spacing:0.0px;-webkit-text-stroke:0.3px currentColor;">$5,918</div>
<div class="t" style="top:371.00px;font-size:16px;line-height:20px;color:#111;left:1614.80px;width:400px;text-align:right;letter-spacing:1.3px;-webkit-text-stroke:0.3px currentColor;">$0</div>
<div class="t" style="top:371.00px;font-size:16px;line-height:20px;color:#111;left:1705.20px;width:400px;text-align:right;letter-spacing:0.0px;-webkit-text-stroke:0.3px currentColor;">$5,918</div>
<div class="t" style="top:371.00px;font-size:16px;line-height:20px;color:#111;left:1797.30px;width:400px;text-align:right;letter-spacing:1.3px;-webkit-text-stroke:0.3px currentColor;">$0</div>
<div class="t" style="top:413.34px;font-size:16px;line-height:20px;color:#111;left:10.50px;letter-spacing:0.45px;-webkit-text-stroke:0.3px currentColor;">Daniel Price MD</div>
<div class="t" style="top:413.34px;font-size:16px;line-height:20px;color:#111;left:157.50px;letter-spacing:0.45px;-webkit-text-stroke:0.3px currentColor;">Associate</div>
<div class="t" style="top:413.34px;font-size:16px;line-height:20px;color:#111;left:252.50px;letter-spacing:0.45px;-webkit-text-stroke:0.3px currentColor;">Marketing</div>
<div class="t" style="top:413.34px;font-size:16px;line-height:20px;color:#111;left:361.50px;letter-spacing:0.45px;-webkit-text-stroke:0.3px currentColor;">Toronto, Canada</div>
<div class="t" style="top:413.34px;font-size:16px;line-height:20px;color:#111;left:567.50px;letter-spacing:0.45px;-webkit-text-stroke:0.3px currentColor;">Contractor</div>
<div class="t" style="top:413.34px;font-size:16px;line-height:20px;color:#111;left:668.50px;letter-spacing:0.45px;-webkit-text-stroke:0.3px currentColor;">USD</div>
<div class="t" style="top:413.34px;font-size:16px;line-height:20px;color:#111;left:769.50px;letter-spacing:0.45px;-webkit-text-stroke:0.3px currentColor;">2024-01-27</div>
<div class="t" style="top:413.34px;font-size:16px;line-height:20px;color:#111;left:610.90px;width:400px;text-align:right;letter-spacing:0.7px;-webkit-text-stroke:0.3px currentColor;">$4,486</div>
<div class="t" style="top:413.34px;font-size:16px;line-height:20px;color:#111;left:702.30px;width:400px;text-align:right;letter-spacing:1.3px;-webkit-text-stroke:0.3px currentColor;">$0</div>
<div class="t" style="top:413.34px;font-size:16px;line-height:20px;color:#111;left:793.40px;width:400px;text-align:right;letter-spacing:0.7px;-webkit-text-stroke:0.3px currentColor;">$4,486</div>
<div class="t" style="top:413.34px;font-size:16px;line-height:20px;color:#111;left:884.80px;width:400px;text-align:right;letter-spacing:1.3px;-webkit-text-stroke:0.3px currentColor;">$0</div>
<div class="t" style="top:413.34px;font-size:16px;line-height:20px;color:#111;left:975.90px;width:400px;text-align:right;letter-spacing:0.7px;-webkit-text-stroke:0.3px currentColor;">$4,486</div>
<div class="t" style="top:413.34px;font-size:16px;line-height:20px;color:#111;left:1067.30px;width:400px;text-align:right;letter-spacing:1.3px;-webkit-text-stroke:0.3px currentColor;">$0</div>
<div class="t" style="top:413.34px;font-size:16px;line-height:20px;color:#111;left:1158.40px;width:400px;text-align:right;letter-spacing:0.7px;-webkit-text-stroke:0.3px currentColor;">$4,486</div>
<div class="t" style="top:413.34px;font-size:16px;line-height:20px;color:#111;left:1249.80px;width:400px;text-align:right;letter-spacing:1.3px;-webkit-text-stroke:0.3px currentColor;">$0</div>
<div class="t" style="top:413.34px;font-size:16px;line-height:20px;color:#111;left:1340.90px;width:400px;text-align:right;letter-spacing:0.7px;-webkit-text-stroke:0.3px currentColor;">$4,486</div>
<div class="t" style="top:413.34px;font-size:16px;line-height:20px;color:#111;left:1432.30px;width:400px;text-align:right;letter-spacing:1.3px;-webkit-text-stroke:0.3px currentColor;">$0</div>
<div class="t" style="top:413.34px;font-size:16px;line-height:20px;color:#111;left:1523.40px;width:400px;text-align:right;letter-spacing:0.7px;-webkit-text-stroke:0.3px currentColor;">$4,486</div>
<div class="t" style="top:413.34px;font-size:16px;line-height:20px;color:#111;left:1614.80px;width:400px;text-align:right;letter-spacing:1.3px;-webkit-text-stroke:0.3px currentColor;">$0</div>
<div class="t" style="top:413.34px;font-size:16px;line-height:20px;color:#111;left:1705.90px;width:400px;text-align:right;letter-spacing:0.7px;-webkit-text-stroke:0.3px currentColor;">$4,486</div>
<div class="t" style="top:413.34px;font-size:16px;line-height:20px;color:#111;left:1797.30px;width:400px;text-align:right;letter-spacing:1.3px;-webkit-text-stroke:0.3px currentColor;">$0</div>
<div class="t" style="top:455.68px;font-size:16px;line-height:20px;color:#111;left:10.50px;letter-spacing:0.45px;-webkit-text-stroke:0.3px currentColor;">Melissa Barnes</div>
<div class="t" style="top:455.68px;font-size:16px;line-height:20px;color:#111;left:157.50px;letter-spacing:0.45px;-webkit-text-stroke:0.3px currentColor;">Associate</div>
<div class="t" style="top:455.68px;font-size:16px;line-height:20px;color:#111;left:252.50px;letter-spacing:0.45px;-webkit-text-stroke:0.3px currentColor;">Marketing</div>
<div class="t" style="top:455.68px;font-size:16px;line-height:20px;color:#111;left:361.50px;letter-spacing:0.45px;-webkit-text-stroke:0.3px currentColor;">Sydney, Australia</div>
<div class="t" style="top:455.68px;font-size:16px;line-height:20px;color:#111;left:567.50px;letter-spacing:0.45px;-webkit-text-stroke:0.3px currentColor;">Contractor</div>
<div class="t" style="top:455.68px;font-size:16px;line-height:20px;color:#111;left:668.50px;letter-spacing:0.45px;-webkit-text-stroke:0.3px currentColor;">USD</div>
<div class="t" style="top:455.68px;font-size:16px;line-height:20px;color:#111;left:769.50px;letter-spacing:0.45px;-webkit-text-stroke:0.3px currentColor;">2020-02-22</div>
<div class="t" style="top:455.68px;font-size:16px;line-height:20px;color:#111;left:610.85px;width:400px;text-align:right;letter-spacing:0.65px;-webkit-text-stroke:0.3px currentColor;">$3,564</div>
<div class="t" style="top:455.68px;font-size:16px;line-height:20px;color:#111;left:702.30px;width:400px;text-align:right;letter-spacing:1.3px;-webkit-text-stroke:0.3px currentColor;">$0</div>
<div class="t" style="top:455.68px;font-size:16px;line-height:20px;color:#111;left:793.35px;width:400px;text-align:right;letter-spacing:0.65px;-webkit-text-stroke:0.3px currentColor;">$3,564</div>
<div class="t" style="top:455.68px;font-size:16px;line-height:20px;color:#111;left:884.80px;width:400px;text-align:right;letter-spacing:1.3px;-webkit-text-stroke:0.3px currentColor;">$0</div>
<div class="t" style="top:455.68px;font-size:16px;line-height:20px;color:#111;left:975.85px;width:400px;text-align:right;letter-spacing:0.65px;-webkit-text-stroke:0.3px currentColor;">$3,564</div>
<div class="t" style="top:455.68px;font-size:16px;line-height:20px;color:#111;left:1067.30px;width:400px;text-align:right;letter-spacing:1.3px;-webkit-text-stroke:0.3px currentColor;">$0</div>
<div class="t" style="top:455.68px;font-size:16px;line-height:20px;color:#111;left:1158.35px;width:400px;text-align:right;letter-spacing:0.65px;-webkit-text-stroke:0.3px currentColor;">$3,564</div>
<div class="t" style="top:455.68px;font-size:16px;line-height:20px;color:#111;left:1249.80px;width:400px;text-align:right;letter-spacing:1.3px;-webkit-text-stroke:0.3px currentColor;">$0</div>
<div class="t" style="top:455.68px;font-size:16px;line-height:20px;color:#111;left:1340.85px;width:400px;text-align:right;letter-spacing:0.65px;-webkit-text-stroke:0.3px currentColor;">$3,564</div>
<div class="t" style="top:455.68px;font-size:16px;line-height:20px;color:#111;left:1432.30px;width:400px;text-align:right;letter-spacing:1.3px;-webkit-text-stroke:0.3px currentColor;">$0</div>
<div class="t" style="top:455.68px;font-size:16px;line-height:20px;color:#111;left:1523.35px;width:400px;text-align:right;letter-spacing:0.65px;-webkit-text-stroke:0.3px currentColor;">$3,564</div>
<div class="t" style="top:455.68px;font-size:16px;line-height:20px;color:#111;left:1614.80px;width:400px;text-align:right;letter-spacing:1.3px;-webkit-text-stroke:0.3px currentColor;">$0</div>
<div class="t" style="top:455.68px;font-size:16px;line-height:20px;color:#111;left:1705.85px;width:400px;text-align:right;letter-spacing:0.65px;-webkit-text-stroke:0.3px currentColor;">$3,564</div>
<div class="t" style="top:455.68px;font-size:16px;line-height:20px;color:#111;left:1797.30px;width:400px;text-align:right;letter-spacing:1.3px;-webkit-text-stroke:0.3px currentColor;">$0</div>
<div class="t" style="top:498.02px;font-size:16px;line-height:20px;color:#111;left:10.50px;letter-spacing:0.45px;-webkit-text-stroke:0.3px currentColor;">Michael Burke</div>
<div class="t" style="top:498.02px;font-size:16px;line-height:20px;color:#111;left:157.50px;letter-spacing:0.45px;-webkit-text-stroke:0.3px currentColor;">Associate</div>
<div class="t" style="top:498.02px;font-size:16px;line-height:20px;color:#111;left:252.50px;letter-spacing:0.45px;-webkit-text-stroke:0.3px currentColor;">Marketing</div>
<div class="t" style="top:498.02px;font-size:16px;line-height:20px;color:#111;left:361.50px;letter-spacing:0.45px;-webkit-text-stroke:0.3px currentColor;">Toronto, Canada</div>
<div class="t" style="top:498.02px;font-size:16px;line-height:20px;color:#111;left:567.50px;letter-spacing:0.45px;-webkit-text-stroke:0.3px currentColor;">Contractor</div>
<div class="t" style="top:498.02px;font-size:16px;line-height:20px;color:#111;left:668.50px;letter-spacing:0.45px;-webkit-text-stroke:0.3px currentColor;">USD</div>
<div class="t" style="top:498.02px;font-size:16px;line-height:20px;color:#111;left:769.50px;letter-spacing:0.45px;-webkit-text-stroke:0.3px currentColor;">2023-08-26</div>
<div class="t" style="top:498.02px;font-size:16px;line-height:20px;color:#111;left:610.65px;width:400px;text-align:right;letter-spacing:0.45px;-webkit-text-stroke:0.3px currentColor;">$3,722</div>
<div class="t" style="top:498.02px;font-size:16px;line-height:20px;color:#111;left:702.30px;width:400px;text-align:right;letter-spacing:1.3px;-webkit-text-stroke:0.3px currentColor;">$0</div>
<div class="t" style="top:498.02px;font-size:16px;line-height:20px;color:#111;left:793.15px;width:400px;text-align:right;letter-spacing:0.45px;-webkit-text-stroke:0.3px currentColor;">$3,722</div>
<div class="t" style="top:498.02px;font-size:16px;line-height:20px;color:#111;left:884.80px;width:400px;text-align:right;letter-spacing:1.3px;-webkit-text-stroke:0.3px currentColor;">$0</div>
<div class="t" style="top:498.02px;font-size:16px;line-height:20px;color:#111;left:975.65px;width:400px;text-align:right;letter-spacing:0.45px;-webkit-text-stroke:0.3px currentColor;">$3,722</div>
<div class="t" style="top:498.02px;font-size:16px;line-height:20px;color:#111;left:1067.30px;width:400px;text-align:right;letter-spacing:1.3px;-webkit-text-stroke:0.3px currentColor;">$0</div>
<div class="t" style="top:498.02px;font-size:16px;line-height:20px;color:#111;left:1158.15px;width:400px;text-align:right;letter-spacing:0.45px;-webkit-text-stroke:0.3px currentColor;">$3,722</div>
<div class="t" style="top:498.02px;font-size:16px;line-height:20px;color:#111;left:1249.80px;width:400px;text-align:right;letter-spacing:1.3px;-webkit-text-stroke:0.3px currentColor;">$0</div>
<div class="t" style="top:498.02px;font-size:16px;line-height:20px;color:#111;left:1340.65px;width:400px;text-align:right;letter-spacing:0.45px;-webkit-text-stroke:0.3px currentColor;">$3,722</div>
<div class="t" style="top:498.02px;font-size:16px;line-height:20px;color:#111;left:1432.30px;width:400px;text-align:right;letter-spacing:1.3px;-webkit-text-stroke:0.3px currentColor;">$0</div>
<div class="t" style="top:498.02px;font-size:16px;line-height:20px;color:#111;left:1523.15px;width:400px;text-align:right;letter-spacing:0.45px;-webkit-text-stroke:0.3px currentColor;">$3,722</div>
<div class="t" style="top:498.02px;font-size:16px;line-height:20px;color:#111;left:1614.80px;width:400px;text-align:right;letter-spacing:1.3px;-webkit-text-stroke:0.3px currentColor;">$0</div>
<div class="t" style="top:498.02px;font-size:16px;line-height:20px;color:#111;left:1705.65px;width:400px;text-align:right;letter-spacing:0.45px;-webkit-text-stroke:0.3px currentColor;">$3,722</div>
<div class="t" style="top:498.02px;font-size:16px;line-height:20px;color:#111;left:1797.30px;width:400px;text-align:right;letter-spacing:1.3px;-webkit-text-stroke:0.3px currentColor;">$0</div>
</div>
</div>
<div class="abs" style="left:24px;top:782px;width:2166px;height:83px;background:#fff;border-left:1px solid #e6e8ec;border-radius:0 0 0 8px;box-shadow:0 2px 3px rgba(15,23,42,0.06)"></div>
<div class="abs" style="left:24px;top:779px;width:2166px;height:3px;background:#e6e8ec"></div>
<div class="abs" style="left:950px;top:802.3px;width:131.3px;height:42.5px;background:#fff;border:1px solid #d5d8de;border-radius:9px;box-shadow:0 1px 2px rgba(0,0,0,0.05)"></div>
<div class="abs" style="left:1093px;top:797.2px;width:51.7px;height:51.4px;background:#eef5fe;border-radius:10px"></div>
<div class="abs" style="left:1155.2px;top:802.3px;width:103.2px;height:42.5px;background:#fff;border:1px solid #d5d8de;border-radius:9px;box-shadow:0 1px 2px rgba(0,0,0,0.05)"></div>
<svg class="abs" style="left:2110px;top:1108px" width="64" height="64" viewBox="2110 1108 64 64"><circle cx="2142.3" cy="1139.8" r="29.4" fill="#234be0"/><circle cx="2142.4" cy="1138.2" r="14.7" fill="#f0fbff"/><path d="M2143 1151 L2149.6 1157.4 L2150 1147" fill="#f0fbff"/><g stroke="#234be0" stroke-width="2.4" stroke-linecap="round"><path d="M2134.5 1130.9 H2141.5"/><path d="M2131.5 1136.5 H2141.5"/><path d="M2131.5 1142.1 H2141.5"/></g></svg>
<div class="abs" style="left:0;top:0;width:2202px;height:1216px;will-change:transform">
<div class="t" style="top:46.36px;font-size:18px;line-height:22px;font-weight:700;color:#fff;left:102.00px;">scenario 1</div>
<div class="t" style="top:45.76px;font-size:18px;line-height:22px;font-weight:700;color:#fff;left:1891.00px;width:400px;text-align:center;">Export CSV</div>
<div class="t" style="top:151.18px;font-size:24px;line-height:30px;font-weight:700;color:#111827;left:24.00px;letter-spacing:-0.3px;">Forecast</div>
<div class="t" style="top:153.38px;font-size:22px;line-height:28px;color:#111827;left:155.00px;">People</div>
<div class="t" style="top:153.38px;font-size:22px;line-height:28px;color:#111827;left:418.50px;">Headcount Cost</div>
<div class="t" style="top:153.38px;font-size:22px;line-height:28px;color:#111827;left:664.50px;">1 selected</div>
<div class="t" style="top:153.38px;font-size:22px;line-height:28px;color:#111827;left:892.50px;">Show changes</div>
<div class="t" style="top:150.37px;font-size:20px;line-height:25px;color:#1e293b;left:1721.00px;-webkit-text-stroke:0.2px currentColor;">Monthly</div>
<div class="t" style="top:150.37px;font-size:20px;line-height:25px;color:#64748b;left:1830.50px;-webkit-text-stroke:0.2px currentColor;">Quarterly</div>
<div class="t" style="top:150.37px;font-size:20px;line-height:25px;color:#64748b;left:1958.50px;-webkit-text-stroke:0.2px currentColor;">Yearly</div>
<div class="t" style="top:152.68px;font-size:22px;line-height:28px;color:#111;left:2064.50px;letter-spacing:0.8px;">2026</div>
<div class="t" style="top:814.46px;font-size:16px;line-height:20px;color:#111827;left:816.20px;width:400px;text-align:center;letter-spacing:0.35px;-webkit-text-stroke:0.3px currentColor;">&lt;&lt; Previous</div>
<div class="t" style="top:813.02px;font-size:19px;line-height:24px;color:#3b6ee8;left:918.30px;width:400px;text-align:center;">1</div>
<div class="t" style="top:814.46px;font-size:16px;line-height:20px;color:#111827;left:1007.20px;width:400px;text-align:center;letter-spacing:0.4px;-webkit-text-stroke:0.3px currentColor;">Next &gt;&gt;</div>
</div>
</body></html>
